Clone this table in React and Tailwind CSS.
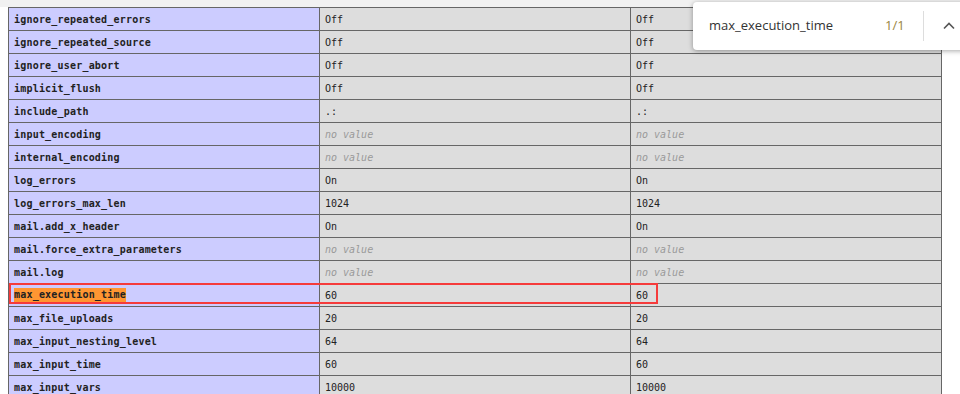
import React from "react";

const rows = [
  ["ignore_repeated_errors", "Off", "Off"],
  ["ignore_repeated_source", "Off", "Off"],
  ["ignore_user_abort", "Off", "Off"],
  ["implicit_flush", "Off", "Off"],
  ["include_path", ".:", ".:"],
  ["input_encoding", null, null],
  ["internal_encoding", null, null],
  ["log_errors", "On", "On"],
  ["log_errors_max_len", "1024", "1024"],
  ["mail.add_x_header", "On", "On"],
  ["mail.force_extra_parameters", null, null],
  ["mail.log", null, null],
  ["max_execution_time", "60", "60"],
  ["max_file_uploads", "20", "20"],
  ["max_input_nesting_level", "64", "64"],
  ["max_input_time", "60", "60"],
  ["max_input_vars", "10000", "10000"],
];

const mono = { fontFamily: "'DejaVu Sans Mono', 'Liberation Mono', monospace" };

function Value({ v }) {
  if (v === null) {
    return <i className="text-[#999] italic">no value</i>;
  }
  return <span>{v}</span>;
}

export default function App() {
  return (
    <div className="relative w-[960px] h-[394px] overflow-hidden bg-white">
      <div className="h-[7px] bg-[#f1f1f1]" />
      <div
        className="ml-[8px] w-[934px] border-l border-t border-[#666] text-[10px] text-[#222]"
        style={mono}
      >
        {rows.map(([name, local, master]) => (
          <div key={name} className="flex h-[23px]">
            <div className="w-[311px] shrink-0 flex items-center pl-[5px] bg-[#ccf] border-r border-b border-[#666] font-bold tracking-[0.2px]">
              {name === "max_execution_time" ? (
                <span className="bg-[#ff9632] leading-[14px]">{name}</span>
              ) : (
                <span>{name}</span>
              )}
            </div>
            <div className="w-[311px] shrink-0 flex items-center pl-[5px] bg-[#ddd] border-r border-b border-[#666]">
              <Value v={local} />
            </div>
            <div className="w-[311px] shrink-0 flex items-center pl-[5px] bg-[#ddd] border-r border-b border-[#666]">
              <Value v={master} />
            </div>
          </div>
        ))}
      </div>

      {/* annotation frame around the max_execution_time row */}
      <div className="absolute left-[9px] top-[283px] w-[649px] h-[21px] border-2 border-[#f53b3b]" />

      {/* browser find-in-page bar */}
      <div
        className="absolute left-[693px] top-[2px] w-[280px] h-[48px] bg-white rounded-[4px] shadow-[0_1px_5px_rgba(0,0,0,0.35)] flex items-center"
        style={{ fontFamily: "'Open Sans', 'Noto Sans', sans-serif" }}
      >
        <span className="ml-[16px] text-[13px] text-[#333] w-[170px]">max_execution_time</span>
        <span className="ml-[6px] text-[13px] text-[#9a8540]">1/1</span>
        <div className="ml-[18px] w-px h-[30px] bg-[#ddd]" />
        <svg className="ml-[18px]" width="14" height="14" viewBox="0 0 14 14">
          <path d="M2 9.5 L7 4.5 L12 9.5" fill="none" stroke="#555" strokeWidth="1.6" />
        </svg>
      </div>
    </div>
  );
}
